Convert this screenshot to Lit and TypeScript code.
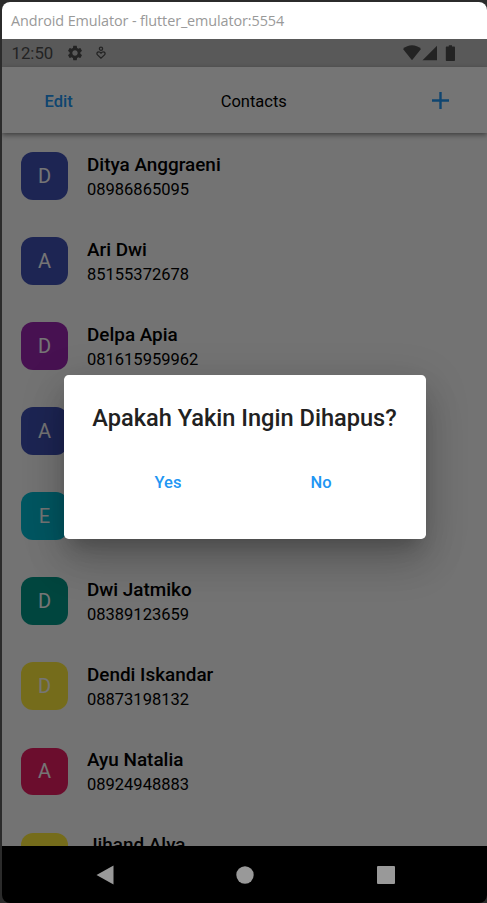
import { LitElement, html, css, svg } from "lit";
import { customElement } from "lit/decorators.js";
import { styleMap } from "lit/directives/style-map.js";

interface Contact {
  name: string;
  phone: string;
  color: string;
}

const INDIGO = "#3f51b5";
const YELLOW = "#ffeb3b";

const CONTACTS: Contact[] = [
  { name: "Ditya Anggraeni", phone: "08986865095", color: INDIGO },
  { name: "Ari Dwi", phone: "85155372678", color: INDIGO },
  { name: "Delpa Apia", phone: "081615959962", color: "#9c27b0" },
  { name: "A", phone: "", color: INDIGO },
  { name: "E", phone: "", color: "#00bcd4" },
  { name: "Dwi Jatmiko", phone: "08389123659", color: "#009688" },
  { name: "Dendi Iskandar", phone: "08873198132", color: YELLOW },
  { name: "Ayu Natalia", phone: "08924948883", color: "#e91e63" },
  { name: "Jihand Alya", phone: "", color: YELLOW },
];

@customElement("contact-row")
class ContactRow extends LitElement {
  static properties = { contact: { attribute: false } };
  declare contact: Contact;

  static styles = css`
    :host {
      display: flex;
      height: 85.03px;
      flex: none;
      align-items: flex-start;
      gap: 19px;
      padding-left: 19px;
    }
    .avatar {
      width: 47px;
      height: 47.4px;
      border-radius: 12px;
      display: grid;
      place-items: center;
      color: #fff;
      font-size: 20px;
      line-height: 47px;
    }
    .text {
      padding-top: 0.6px;
    }
    .name {
      font-size: 18.9px;
      font-weight: 500;
      line-height: 24px;
    }
    .phone {
      font-size: 16.5px;
      line-height: 25px;
    }
  `;

  render() {
    const { name, phone, color } = this.contact;
    const hidden = name.length === 1;
    return html`
      <div class="avatar" style=${styleMap({ background: color })}>${name[0] === "J" ? "" : name[0]}</div>
      <div class="text">
        <div class="name">${hidden ? "" : name}</div>
        <div class="phone">${phone}</div>
      </div>
    `;
  }
}

@customElement("confirm-dialog")
class ConfirmDialog extends LitElement {
  static styles = css`
    :host {
      display: flex;
      flex-direction: column;
      width: 362px;
      height: 164px;
      box-sizing: border-box;
      padding: 29px 28px 0;
      border-radius: 4.7px;
      background: #fff;
      box-shadow: 0 13px 18px -8px rgba(0, 0, 0, 0.2), 0 26px 40px 0 rgba(0, 0, 0, 0.14),
        0 10px 44px 4px rgba(0, 0, 0, 0.12);
    }
    .title {
      font-size: 23.6px;
      line-height: 29px;
      font-weight: 500;
      color: #212121;
      white-space: nowrap;
      text-align: center;
    }
    .actions {
      display: grid;
      grid-template-columns: 1fr 1fr;
      margin-top: 39px;
      text-align: center;
      color: #2196f3;
      font-size: 16.5px;
      line-height: 22px;
      font-weight: 500;
    }
  `;

  render() {
    return html`
      <div class="title">Apakah Yakin Ingin Dihapus?</div>
      <div class="actions"><span>Yes</span><span>No</span></div>
    `;
  }
}

const gear = svg`<path d="M19.14 12.94c.04-.3.06-.61.06-.94 0-.32-.02-.64-.07-.94l2.03-1.58c.18-.14.23-.41.12-.61l-1.92-3.32c-.12-.22-.37-.29-.59-.22l-2.39.96c-.5-.38-1.03-.7-1.62-.94l-.36-2.54c-.04-.24-.24-.41-.48-.41h-3.84c-.24 0-.43.17-.47.41l-.36 2.54c-.59.24-1.13.57-1.62.94l-2.39-.96c-.22-.08-.47 0-.59.22L2.74 8.87c-.12.21-.08.47.12.61l2.03 1.58c-.05.3-.09.63-.09.94s.02.64.07.94l-2.03 1.58c-.18.14-.23.41-.12.61l1.92 3.32c.12.22.37.29.59.22l2.39-.96c.5.38 1.03.7 1.62.94l.36 2.54c.05.24.24.41.48.41h3.84c.24 0 .44-.17.47-.41l.36-2.54c.59-.24 1.13-.56 1.62-.94l2.39.96c.22.08.47 0 .59-.22l1.92-3.32c.12-.22.07-.47-.12-.61l-2.01-1.58zM12 15.6c-1.98 0-3.6-1.62-3.6-3.6s1.62-3.6 3.6-3.6 3.6 1.62 3.6 3.6-1.62 3.6-3.6 3.6z"/>`;

@customElement("app-root")
class AppRoot extends LitElement {
  static styles = css`
    :host {
      display: block;
      box-sizing: border-box;
      width: 487px;
      height: 903px;
      padding: 2px 0 0 2px;
      overflow: hidden;
      background: #2b2b2b;
      font-family: Roboto, "Liberation Sans", sans-serif;
      color: #000;
    }
    .window {
      display: flex;
      flex-direction: column;
      width: 485px;
      height: 901px;
      border-radius: 8px;
      overflow: hidden;
      background: #000;
    }
    .titlebar {
      flex: none;
      height: 37px;
      background: #fff;
      color: #999;
      font-family: "Open Sans", "Noto Sans", sans-serif;
      font-size: 14.4px;
      letter-spacing: -0.1px;
      line-height: 37px;
      padding-left: 9px;
      white-space: nowrap;
    }
    .screen {
      position: relative;
      display: flex;
      flex-direction: column;
      height: 807px;
      flex: none;
      overflow: hidden;
      background: #fafafa;
    }
    .status {
      display: flex;
      flex: none;
      align-items: center;
      height: 28px;
      padding: 0 32px 0 9.5px;
      background: #c2c2c2;
      color: #4d4d4d;
      fill: #4d4d4d;
      font-size: 16.8px;
      line-height: 30px;
    }
    .status svg {
      display: block;
      flex: none;
    }
    .gear {
      margin-left: 12.6px;
    }
    .person {
      margin-left: 12px;
    }
    .signals {
      margin-left: auto;
    }
    .appbar {
      display: grid;
      grid-template-columns: 1fr auto 1fr;
      flex: none;
      align-items: center;
      height: 66px;
      padding: 1px 38px 0 42.5px;
      box-sizing: border-box;
      background: #fff;
      font-size: 16.5px;
      box-shadow: 0 2px 5px rgba(0, 0, 0, 0.45);
      z-index: 1;
    }
    .edit,
    .heading {
      padding-top: 1px;
    }
    .edit {
      color: #2196f3;
      font-weight: 500;
    }
    .heading {
      margin: 0 0 0 14px;
    }
    .add {
      justify-self: end;
      display: block;
    }
    .list {
      display: flex;
      flex-direction: column;
      flex: 1;
      min-height: 0;
      overflow: hidden;
      padding-top: 19.4px;
    }
    .scrim {
      position: absolute;
      inset: 0;
      z-index: 2;
      display: flex;
      justify-content: center;
      align-items: flex-start;
      padding: 336px 0 0 0;
      background: rgba(0, 0, 0, 0.54);
    }
    .nav {
      display: grid;
      grid-template-columns: repeat(3, 140.5px);
      flex: 1;
      align-items: center;
      justify-items: center;
      justify-content: center;
      padding-left: 1px;
    }
    .nav svg {
      display: block;
      fill: #999;
    }
  `;

  render() {
    return html`
      <div class="window">
        <div class="titlebar">Android Emulator - flutter_emulator:5554</div>
        <div class="screen">
          <div class="status">
            <span>12:50</span>
            <svg class="gear" width="18" height="18" viewBox="0 0 24 24">${gear}</svg>
            <svg class="person" width="10" height="14" viewBox="0 0 10 14" fill="none" stroke="#4d4d4d" stroke-width="1.3">
              <circle cx="5" cy="2.7" r="1.6" fill="none" />
              <path fill="none" d="M5 12.2 1.5 8.9C.3 7.5 1.2 5.8 2.8 5.8c1 0 1.7.5 2.2 1.3.5-.8 1.2-1.3 2.2-1.3 1.6 0 2.5 1.7 1.3 3.1z" />
            </svg>
            <svg class="signals" width="52" height="16" viewBox="0 0 52 16">
              <path d="M0 4.1C5-.9 13-.9 18 4.1L9 15.2z" />
              <path d="M19.5 15.2 34 .7v14.5z" />
              <path d="M43.6 1.6h2.2V.2h3.2v1.4h2.2q.8 0 .8.8v12.8q0 .8-.8.8h-7.6q-.8 0-.8-.8V2.4q0-.8.8-.8z" />
            </svg>
          </div>
          <div class="appbar">
            <span class="edit">Edit</span>
            <span class="heading">Contacts</span>
            <svg class="add" width="17" height="17" viewBox="0 0 17 17" fill="#2196f3">
              <path d="M7.3 0h2.4v7.3H17v2.4H9.7V17H7.3V9.7H0V7.3h7.3z" />
            </svg>
          </div>
          <div class="list">
            ${CONTACTS.map((c) => html`<contact-row .contact=${c}></contact-row>`)}
          </div>
          <div class="scrim"><confirm-dialog></confirm-dialog></div>
        </div>
        <div class="nav">
          <svg width="18" height="20" viewBox="0 0 18 20"><path d="M17.5.5v19L.5 10z" /></svg>
          <svg width="18" height="18" viewBox="0 0 18 18"><circle cx="9" cy="9" r="8.7" /></svg>
          <svg width="18" height="18" viewBox="0 0 18 18"><rect width="18" height="18" rx="1" /></svg>
        </div>
      </div>
    `;
  }
}
